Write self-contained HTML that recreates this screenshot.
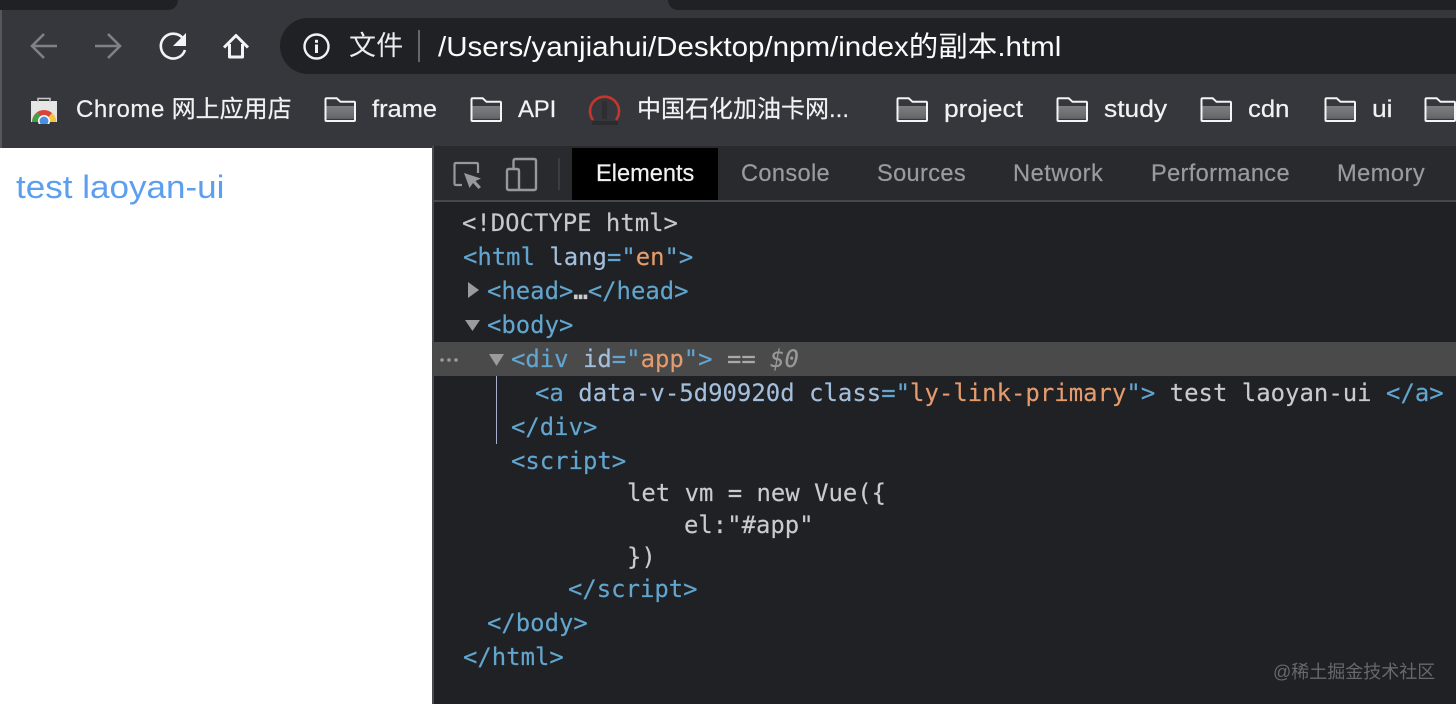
<!DOCTYPE html>
<html lang="zh"><head><meta charset="utf-8"><title>index</title>
<style>
html,body{margin:0;padding:0;width:1456px;height:704px;overflow:hidden;background:#fff}
*{box-sizing:border-box}
.a{position:absolute;white-space:pre}
#root{position:relative;width:1456px;height:704px;overflow:hidden;font-family:"Liberation Sans","Noto Sans CJK SC",sans-serif}
.bm{color:#f1f2f3;font-size:24px;line-height:30px;top:95px;-webkit-text-stroke:.2px #f1f2f3;transform-origin:0 50%}
.tab{color:#9a9b9e;font-size:23.6px;line-height:30px;top:159px;letter-spacing:.35px;-webkit-text-stroke:.2px #9a9b9e}
.c{position:absolute;white-space:pre;font-family:"DejaVu Sans Mono","Liberation Mono",monospace;font-size:23.92px;line-height:32px;color:#c6c8ca;-webkit-text-stroke:.15px currentColor}
.t{color:#62a6cf}.n{color:#a4bfdc}.v{color:#e59b6c}.g{color:#c9cbcd}
</style></head><body><div id="root">

<div class="a" style="left:0;top:0;width:1456px;height:148px;background:#36373c"></div>
<div class="a" style="left:0;top:0;width:2px;height:148px;background:#56575b"></div>
<div class="a" style="left:0;top:0;width:178px;height:10px;background:#202124;border-bottom-right-radius:10px"></div>
<div class="a" style="left:668px;top:0;width:788px;height:10px;background:#202124;border-bottom-left-radius:10px"></div>

<svg class="a" style="left:0;top:0" width="280" height="70" fill="none">
<path d="M57 46H32M44 34L32 46l12 12" stroke="#808185" stroke-width="2.6"/>
<path d="M95 46h25M108 34l12 12-12 12" stroke="#808185" stroke-width="2.6"/>
<path d="M183 38.500A12.400 12.400 0 1 0 185 50" stroke="#f3f4f5" stroke-width="2.6"/>
<path d="M186 33v13h-13z" fill="#f3f4f5"/>
<path d="M224 47.500L236 35.500 248 47.500M229.500 44V57H242.500V44" stroke="#f3f4f5" stroke-width="3" stroke-linejoin="round"/>
</svg>

<div class="a" style="left:280px;top:18px;width:1176px;height:56px;background:#202124;border-radius:28px 0 0 28px"></div>
<svg class="a" style="left:302px;top:32px" width="30" height="30" fill="none">
<circle cx="14.500" cy="14.500" r="12" stroke="#f1f2f3" stroke-width="2.400"/>
<rect x="13" y="12.500" width="3" height="8.500" fill="#f1f2f3"/><rect x="13" y="7.800" width="3" height="3" fill="#f1f2f3"/>
</svg>
<div class="a" style="left:349px;top:29px;font-size:27px;line-height:34px;color:#eceded;letter-spacing:.3px">文件</div>
<div class="a" style="left:418px;top:30px;width:2px;height:32px;background:#66676a"></div>
<div class="a" style="left:438px;top:29px;font-size:28px;line-height:36px;color:#fbfbfb;transform-origin:0 50%;transform:scaleX(1.054)">/Users/yanjiahui/Desktop/npm/index的副本.html</div>

<svg class="a" style="left:30px;top:96px" width="28" height="28">
<rect x="1" y="5" width="26" height="21" fill="#e6e6e6"/>
<path d="M8 6V2.500h12V6" fill="none" stroke="#c9c9c9" stroke-width="1.500"/>
<path d="M2 26a12 12 0 0 1 24 0z" fill="#d8443a"/>
<path d="M2 26a12 12 0 0 1 6-10l5 10z" fill="#45a045"/>
<path d="M26 26a12 12 0 0 0-4-9l-8 9z" fill="#f4c63d"/>
<circle cx="14" cy="25" r="6" fill="#fff"/><circle cx="14" cy="25" r="4.500" fill="#4a90e2"/>
</svg>
<div class="a bm" style="left:76px"><span style="letter-spacing:.6px">Chrome</span> 网上应用店</div>

<svg width="0" height="0" style="position:absolute"><defs>
<linearGradient id="fg" x1="0" y1="0" x2="0" y2="1"><stop offset="0" stop-color="#7d7e81"/><stop offset=".8" stop-color="#6a6b6e"/><stop offset="1" stop-color="#5a5b5e"/></linearGradient>
<g id="fo"><path d="M1.500 23V2.500q0-1.200 1.200-1.200h10L16.500 4.800H30q1 0 1 1V23q0 1-1 1H2.500q-1 0-1-1z" fill="none" stroke="#f4f4f5" stroke-width="2"/><rect x="2.500" y="9" width="27.500" height="13" fill="url(#fg)"/></g>
</defs></svg>
<svg class="a" style="left:324px;top:97px" width="33" height="26"><use href="#fo"/></svg>
<div class="a bm" style="left:372px;transform:scaleX(1.06)">frame</div>
<svg class="a" style="left:470px;top:97px" width="33" height="26"><use href="#fo"/></svg>
<div class="a bm" style="left:518px;letter-spacing:-.2px">API</div>

<svg class="a" style="left:586px;top:92px" width="36" height="36" fill="none">
<path d="M7 28A14.500 14.500 0 1 1 30 28" stroke="#c8352b" stroke-width="2.600"/>
<rect x="16" y="9" width="5" height="18" fill="#2e2e32"/>
<rect x="6" y="29" width="26" height="4" fill="#2c2c2f"/>
</svg>
<div class="a bm" style="left:637px">中国石化加油卡网...</div>
<svg class="a" style="left:896px;top:97px" width="33" height="26"><use href="#fo"/></svg>
<div class="a bm" style="left:944px;transform:scaleX(1.097)">project</div>
<svg class="a" style="left:1056px;top:97px" width="33" height="26"><use href="#fo"/></svg>
<div class="a bm" style="left:1104px;transform:scaleX(1.1)">study</div>
<svg class="a" style="left:1200px;top:97px" width="33" height="26"><use href="#fo"/></svg>
<div class="a bm" style="left:1248px;transform:scaleX(1.07)">cdn</div>
<svg class="a" style="left:1324px;top:97px" width="33" height="26"><use href="#fo"/></svg>
<div class="a bm" style="left:1372px;transform:scaleX(1.1)">ui</div>
<svg class="a" style="left:1424px;top:97px" width="33" height="26"><use href="#fo"/></svg>

<div class="a" style="left:0;top:148px;width:432px;height:556px;background:#fff"></div>
<div class="a" style="left:16px;top:168px;font-size:32px;line-height:38px;color:#5c9fee;transform-origin:0 50%;transform:scaleX(1.095)">test laoyan-ui</div>

<div class="a" style="left:432px;top:146px;width:1024px;height:558px;background:#202124"></div>
<div class="a" style="left:432px;top:146px;width:2px;height:558px;background:#4a4b4e"></div>
<div class="a" style="left:434px;top:146px;width:1022px;height:54px;background:#292a2d"></div>
<div class="a" style="left:434px;top:200px;width:1022px;height:2px;background:#47484b"></div>
<svg class="a" style="left:450px;top:156px" width="90" height="36" fill="none">
<path d="M12 29H6q-1.500 0-1.500-1.500V8.500Q4.500 7 6 7h20.500Q28 7 28 8.500V17" stroke="#97989b" stroke-width="2.200"/>
<path d="M14 17l17 5.500-5.500 2.500 5.500 6-2.500 2-5.500-6-3.500 5z" fill="#97989b"/>
<path d="M63.500 12V5q0-2 2-2H84q2 0 2 2v27q0 2-2 2H59q-2 0-2-2V15q0-2 2-2h8q2 0 2 2v19" stroke="#97989b" stroke-width="2.400"/>
</svg>
<div class="a" style="left:558px;top:158px;width:2px;height:32px;background:#3c3d40"></div>
<div class="a" style="left:572px;top:148px;width:146px;height:52px;background:#000"></div>
<div class="a tab" style="left:596px;color:#f1f1f1;letter-spacing:0;-webkit-text-stroke:.2px #f1f1f1">Elements</div>
<div class="a tab" style="left:741px">Console</div>
<div class="a tab" style="left:877px">Sources</div>
<div class="a tab" style="left:1013px;letter-spacing:.55px">Network</div>
<div class="a tab" style="left:1151px">Performance</div>
<div class="a tab" style="left:1337px;letter-spacing:.5px">Memory</div>

<div class="a" style="left:434px;top:342px;width:1022px;height:34px;background:#4a4a4b"></div>
<div class="a" style="left:496px;top:376px;width:1px;height:68px;background:#a9b1d0"></div>
<svg class="a" style="left:434px;top:280px" width="80" height="100" fill="#9a9b9c">
<path d="M34 2l11 8-11 8z"/>
<path d="M31 40h15l-7.500 11z"/>
<path d="M55 74h15l-7.500 12z"/>
<circle cx="8" cy="80" r="1.800"/><circle cx="15" cy="80" r="1.800"/><circle cx="22" cy="80" r="1.800"/>
</svg>

<div class="c" style="left:462px;top:207px">&lt;!DOCTYPE html&gt;</div>
<div class="c t" style="left:463px;top:241px">&lt;html <span class="n">lang</span>="<span class="v">en</span>"&gt;</div>
<div class="c t" style="left:487px;top:275px">&lt;head&gt;<span class="g" style="font-weight:bold">…</span>&lt;/head&gt;</div>
<div class="c t" style="left:487px;top:309px">&lt;body&gt;</div>
<div class="c t" style="left:511px;top:343px">&lt;div <span class="n">id</span>="<span class="v">app</span>"&gt; <span style="color:#a8a9aa">==</span> <span style="color:#98999a;font-style:italic">$0</span></div>
<div class="c t" style="left:535px;top:377px;letter-spacing:.03px">&lt;a <span class="n">data-v-5d90920d</span> <span class="n">class</span>="<span class="v">ly-link-primary</span>"&gt; <span class="g">test laoyan-ui</span> &lt;/a&gt;</div>
<div class="c t" style="left:511px;top:411px">&lt;/div&gt;</div>
<div class="c t" style="left:511px;top:445px">&lt;script&gt;</div>
<div class="c g" style="left:627px;top:477px">let vm = new Vue({</div>
<div class="c g" style="left:684px;top:509px">el:"#app"</div>
<div class="c g" style="left:627px;top:541px">})</div>
<div class="c t" style="left:568px;top:573px">&lt;/script&gt;</div>
<div class="c t" style="left:487px;top:607px">&lt;/body&gt;</div>
<div class="c t" style="left:463px;top:641px">&lt;/html&gt;</div>

<div class="a" style="left:1273px;top:660px;font-size:18px;line-height:24px;color:#67686a">@稀土掘金技术社区</div>
</div></body></html>
